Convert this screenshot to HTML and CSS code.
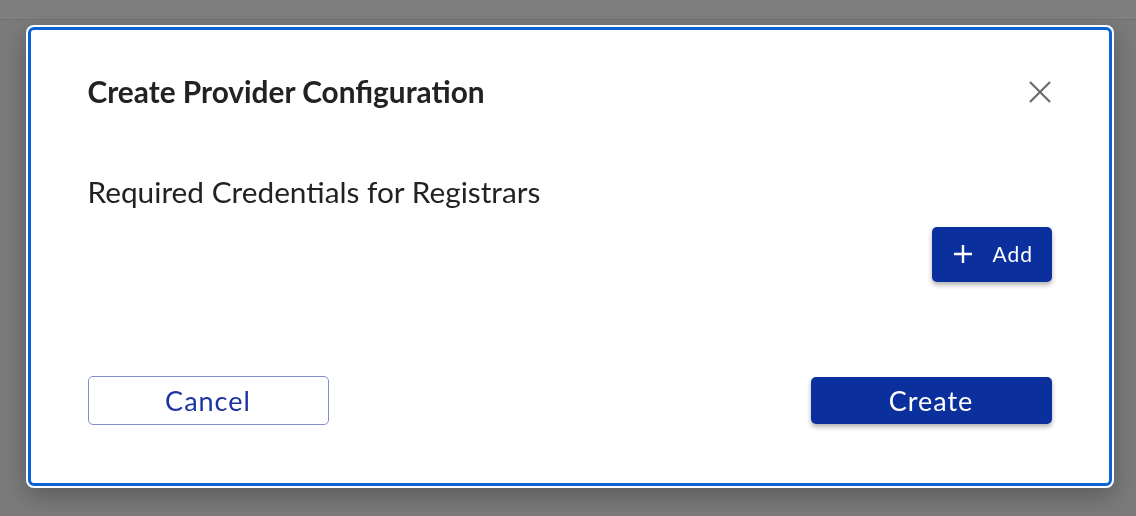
FILE: index.html
```html
<!DOCTYPE html>
<html lang="en">

<head>
	<meta charset="UTF-8">
	<meta name="viewport" content="width=device-width, initial-scale=1.0">
	<title>Create Provider Configuration</title>
	<link rel="stylesheet" href="styles.css">
</head>

<body>
	<header class="app-bar"></header>

	<div class="backdrop">
		<div class="dialog" role="dialog" aria-labelledby="dialogTitle">
			<div class="dialog-head">
				<h2 id="dialogTitle">Create Provider Configuration</h2>
				<button type="button" class="close-btn" aria-label="Close">
					<svg width="24" height="24" viewBox="0 0 24 24">
						<path d="M2 2 L22 22 M22 2 L2 22" stroke="#6b6b6b" stroke-width="2.2" fill="none"/>
					</svg>
				</button>
			</div>

			<p class="section-label">Required Credentials for Registrars</p>

			<div class="add-row">
				<button type="button" class="btn btn-filled btn-add">
					<svg width="20" height="20" viewBox="0 0 20 20">
						<path d="M10 1 V19 M1 10 H19" stroke="#fff" stroke-width="2.4" fill="none"/>
					</svg>
					<span>Add</span>
				</button>
			</div>

			<div class="actions">
				<button type="button" class="btn btn-outline">Cancel</button>
				<button type="button" class="btn btn-filled btn-wide">Create</button>
			</div>
		</div>
	</div>
</body>
</html>
```

FILE: styles.css
```css
body {
	margin: 0;
	font-family: Lato, "Open Sans", sans-serif;
	background-color: #f4f4f4;
	height: 516px;
	overflow: hidden;
}

.app-bar {
	height: 19px;
	background-color: #ffffff;
	border-bottom: 1px solid #e2e2e2;
}

.backdrop {
	position: fixed;
	inset: 0;
	background-color: hsla(0, 0%, 0%, 0.5);
	display: flex;
	align-items: center;
	justify-content: center;
	padding-left: 3px;
}

.dialog {
	box-sizing: border-box;
	width: 1088px;
	padding: 50px 62px 63px 62px;
	margin-top: -4px;
	background-color: #ffffff;
	border-radius: 8px;
	box-shadow: inset 0 0 0 2px #ffffff, inset 0 0 0 5px #0b63d4, 0 8px 24px hsla(0, 0%, 0%, 0.25);
}

.dialog-head {
	display: flex;
	align-items: center;
	justify-content: space-between;
	height: 34px;
}

h2 {
	margin: 0;
	font-size: 29.8px;
	font-weight: 700;
	color: #222222;
	line-height: 34px;
}

.close-btn {
	background: none;
	border: none;
	padding: 0;
	margin-right: 0;
	width: 24px;
	height: 24px;
	cursor: pointer;
}

.section-label {
	margin: 66px 0 0;
	font-size: 29.8px;
	line-height: 34px;
	color: #222222;
}

.add-row {
	display: flex;
	justify-content: flex-end;
	margin-top: 18px;
}

.btn {
	font-family: Lato, "Open Sans", sans-serif;
	border-radius: 5px;
	cursor: pointer;
	letter-spacing: 1px;
}

.btn-filled {
	background-color: #0c2f9e;
	color: #ffffff;
	border: none;
	box-shadow: 0 3px 5px hsla(0, 0%, 0%, 0.3);
}

.btn-add {
	display: flex;
	align-items: center;
	gap: 20px;
	width: 120px;
	height: 55px;
	padding: 0 0 0 21px;
	font-size: 21px;
}

.btn-add span {
	margin-top: -1px;
}

.actions {
	display: flex;
	justify-content: space-between;
	align-items: center;
	margin-top: 94px;
}

.btn-outline {
	width: 241px;
	height: 49px;
	background-color: #ffffff;
	border: 1px solid #7f8fd2;
	color: #1a34a3;
	font-size: 27px;
	padding-top: 2px;
}

.btn-wide {
	width: 241px;
	height: 47px;
	font-size: 27px;
	padding-top: 2px;
}
```
